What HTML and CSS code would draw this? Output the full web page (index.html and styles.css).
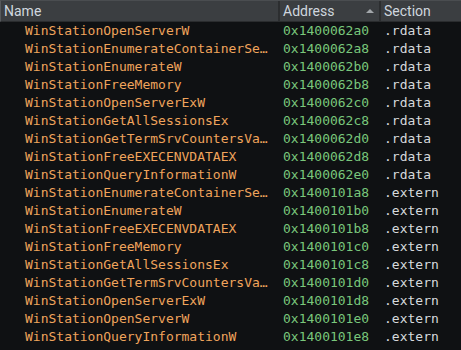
FILE: index.html
```html
<!DOCTYPE html>
<html lang="en">
<head>
    <meta charset="UTF-8">
    <title>Symbols</title>
    <link rel="stylesheet" href="styles.css">
</head>
<body>
    <div class="symbols">
        <div class="header">
            <div class="head-cell">Name</div>
            <div class="head-cell sorted">Address <span class="sort-arrow"></span></div>
            <div class="head-cell">Section</div>
        </div>
        <div class="rows">
            <div class="row"><span class="name">WinStationOpenServerW</span><span class="addr">0x1400062a0</span><span class="sect">.rdata</span></div>
            <div class="row"><span class="name">WinStationEnumerateContainerSe…</span><span class="addr">0x1400062a8</span><span class="sect">.rdata</span></div>
            <div class="row"><span class="name">WinStationEnumerateW</span><span class="addr">0x1400062b0</span><span class="sect">.rdata</span></div>
            <div class="row"><span class="name">WinStationFreeMemory</span><span class="addr">0x1400062b8</span><span class="sect">.rdata</span></div>
            <div class="row"><span class="name">WinStationOpenServerExW</span><span class="addr">0x1400062c0</span><span class="sect">.rdata</span></div>
            <div class="row"><span class="name">WinStationGetAllSessionsEx</span><span class="addr">0x1400062c8</span><span class="sect">.rdata</span></div>
            <div class="row"><span class="name">WinStationGetTermSrvCountersVa…</span><span class="addr">0x1400062d0</span><span class="sect">.rdata</span></div>
            <div class="row"><span class="name">WinStationFreeEXECENVDATAEX</span><span class="addr">0x1400062d8</span><span class="sect">.rdata</span></div>
            <div class="row"><span class="name">WinStationQueryInformationW</span><span class="addr">0x1400062e0</span><span class="sect">.rdata</span></div>
            <div class="row"><span class="name">WinStationEnumerateContainerSe…</span><span class="addr">0x1400101a8</span><span class="sect">.extern</span></div>
            <div class="row"><span class="name">WinStationEnumerateW</span><span class="addr">0x1400101b0</span><span class="sect">.extern</span></div>
            <div class="row"><span class="name">WinStationFreeEXECENVDATAEX</span><span class="addr">0x1400101b8</span><span class="sect">.extern</span></div>
            <div class="row"><span class="name">WinStationFreeMemory</span><span class="addr">0x1400101c0</span><span class="sect">.extern</span></div>
            <div class="row"><span class="name">WinStationGetAllSessionsEx</span><span class="addr">0x1400101c8</span><span class="sect">.extern</span></div>
            <div class="row"><span class="name">WinStationGetTermSrvCountersVa…</span><span class="addr">0x1400101d0</span><span class="sect">.extern</span></div>
            <div class="row"><span class="name">WinStationOpenServerExW</span><span class="addr">0x1400101d8</span><span class="sect">.extern</span></div>
            <div class="row"><span class="name">WinStationOpenServerW</span><span class="addr">0x1400101e0</span><span class="sect">.extern</span></div>
            <div class="row"><span class="name">WinStationQueryInformationW</span><span class="addr">0x1400101e8</span><span class="sect">.extern</span></div>
        </div>
    </div>
</body>
</html>
```

FILE: styles.css
```css
* {
    box-sizing: border-box;
}

body {
    margin: 0;
    background-color: #0f1113;
    overflow: hidden;
}

.symbols {
    width: 461px;
    height: 350px;
}

.header {
    display: grid;
    grid-template-columns: 279px 101px 1fr;
    height: 22px;
    background-color: #3b3e41;
    border-top: 1px solid #4a4d50;
    border-left: 1px solid #56595c;
    border-bottom: 1px solid #2a2c2e;
}

.head-cell {
    display: flex;
    align-items: center;
    padding-left: 3px;
    border-right: 2px solid #2c2e30;
    font-family: Roboto, sans-serif;
    font-size: 14px;
    color: #cfd6de;
    white-space: nowrap;
}

.head-cell:last-child {
    border-right: none;
}

.sorted {
    justify-content: space-between;
    padding-right: 5px;
}

.sort-arrow {
    width: 0;
    height: 0;
    border-left: 4px solid transparent;
    border-right: 4px solid transparent;
    border-bottom: 4px solid #a3a7ab;
}

.rows {
    font-family: "DejaVu Sans Mono", monospace;
    font-size: 13px;
}

.row {
    display: grid;
    grid-template-columns: 279px 101px 1fr;
    height: 18px;
    line-height: 18px;
    white-space: nowrap;
}

.name {
    padding-left: 25px;
    color: #f0a45c;
}

.addr {
    padding-left: 4px;
    color: #79c77b;
}

.sect {
    padding-left: 4px;
    color: #d6dadd;
}
```
